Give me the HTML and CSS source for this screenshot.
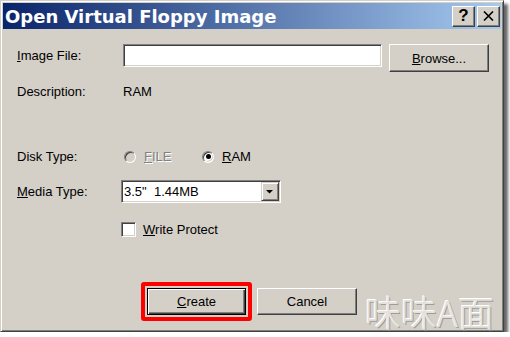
FILE: index.html
```html
<!DOCTYPE html>
<html>
<head>
<meta charset="utf-8">
<link rel="stylesheet" href="styles.css">
</head>
<body>
<div class="window">
  <div class="titlebar">
    <span class="title">Open Virtual Floppy Image</span>
    <div class="tbtns">
      <span class="tbtn help">?</span>
      <span class="tbtn close"><svg width="11" height="10" viewBox="0 0 11 10"><path d="M1 0.5 L10 9.5 M10 0.5 L1 9.5" stroke="#000" stroke-width="1.6" fill="none"/></svg></span>
    </div>
  </div>
  <div class="content">
    <div class="row r-file">
      <span class="label"><u>I</u>mage File:</span>
      <span class="input"></span>
      <span class="btn browse"><span><u>B</u>rowse...</span></span>
    </div>
    <div class="row r-desc">
      <span class="label">Description:</span>
      <span class="value">RAM</span>
    </div>
    <div class="row r-disk">
      <span class="label lbl-disk">Disk Type:</span>
      <span class="radio disabled"></span>
      <span class="rlabel rl-file disabled-text"><u>F</u>ILE</span>
      <span class="radio checked"></span>
      <span class="rlabel"><u>R</u>AM</span>
    </div>
    <div class="row r-media">
      <span class="label lbl-media"><u>M</u>edia Type:</span>
      <div class="select">
        <span class="seltext">3.5"&nbsp; 1.44MB</span>
        <span class="selbtn"><svg width="8" height="4" viewBox="0 0 8 4"><path d="M0 0 H7 L3.5 3.5 Z" fill="#000"/></svg></span>
      </div>
    </div>
    <div class="row r-check">
      <span class="check"></span>
      <span class="clabel"><u>W</u>rite Protect</span>
    </div>
    <div class="row r-btns">
      <span class="highlight"><span class="btn default"><span><u>C</u>reate</span></span></span>
      <span class="btn cancel"><span>Cancel</span></span>
    </div>
  </div>
  <div class="watermark">味味A面</div>
</div>
</body>
</html>
```
FILE: styles.css
```css
html, body {
  margin: 0;
  padding: 0;
  background: #ffffff;
}
body {
  font-family: "Liberation Sans", Arial, sans-serif;
  font-size: 13px;
  color: #000;
}
.window {
  position: relative;
  width: 504px;
  height: 332px;
  box-sizing: border-box;
  background: #d4d0c8;
  border: 1px solid;
  border-color: #d4d0c8 #404040 #404040 #d4d0c8;
  padding: 2px;
  box-shadow: inset 1px 1px #ffffff, inset -1px -1px #808080, 4px 4px 3px rgba(0,0,0,0.6);
}
.titlebar {
  height: 26px;
  display: flex;
  align-items: center;
  justify-content: space-between;
  background: linear-gradient(to right, #0a246a, #a6caf0);
}
.title {
  font-family: "DejaVu Sans", Verdana, sans-serif;
  font-weight: bold;
  font-size: 18px;
  color: #fff;
  padding-left: 2px;
  white-space: nowrap;
}
.tbtns {
  display: flex;
  gap: 2px;
  margin-right: 1px;
}
.tbtn {
  width: 23px;
  height: 21px;
  box-sizing: border-box;
  background: #d4d0c8;
  border: 1px solid;
  border-color: #ffffff #404040 #404040 #ffffff;
  box-shadow: inset -1px -1px #808080;
  display: flex;
  align-items: center;
  justify-content: center;
}
.help {
  font-family: "Liberation Sans", Arial, sans-serif;
  font-weight: bold;
  font-size: 17px;
  line-height: 1;
  padding-bottom: 1px;
}
.content {
  padding-left: 14px;
}
.row {
  display: flex;
}
.label {
  width: 106px;
  flex: none;
}
.r-file {
  margin-top: 15px;
  align-items: flex-start;
}
.r-file .label {
  line-height: 23px;
}
.input {
  width: 259px;
  height: 23px;
  box-sizing: border-box;
  background: #fff;
  border: 1px solid;
  border-color: #808080 #ffffff #ffffff #808080;
  box-shadow: inset 1px 1px #404040, inset -1px -1px #d4d0c8;
}
.btn {
  box-sizing: border-box;
  background: #d4d0c8;
  border: 1px solid;
  border-color: #ffffff #404040 #404040 #ffffff;
  box-shadow: inset -1px -1px #808080;
  display: flex;
  align-items: center;
  justify-content: center;
  flex: none;
}
.browse {
  margin-left: 7px;
  width: 100px;
  height: 28px;
}
.r-desc {
  margin-top: 12px;
  line-height: 15px;
}
.r-disk {
  margin-top: 50px;
  line-height: 15px;
  align-items: center;
}
.lbl-disk {
  width: 107px;
}
.radio {
  position: relative;
  width: 12px;
  height: 12px;
  box-sizing: border-box;
  border-radius: 50%;
  border: 1px solid;
  border-color: #808080 #ffffff #ffffff #808080;
  box-shadow: inset 1px 1px #404040, inset -1px -1px #d4d0c8;
  background: #fff;
  flex: none;
}
.radio.disabled {
  background: #d4d0c8;
}
.radio.checked::after {
  content: "";
  position: absolute;
  left: 2.5px;
  top: 2.5px;
  width: 5px;
  height: 5px;
  border-radius: 50%;
  background: #000;
}
.rlabel {
  margin-left: 8px;
}
.rl-file {
  width: 58px;
}
.disabled-text {
  color: #808080;
  text-shadow: 1px 1px #ffffff;
}
.r-media {
  margin-top: 16px;
  align-items: center;
}
.lbl-media {
  width: 104px;
}
.select {
  width: 160px;
  height: 23px;
  box-sizing: border-box;
  background: #fff;
  border: 1px solid;
  border-color: #808080 #ffffff #ffffff #808080;
  box-shadow: inset 1px 1px #404040, inset -1px -1px #d4d0c8;
  display: flex;
  align-items: center;
  justify-content: space-between;
  padding: 1px;
}
.seltext {
  padding-left: 1px;
  line-height: 15px;
  white-space: nowrap;
}
.selbtn {
  width: 18px;
  height: 19px;
  box-sizing: border-box;
  background: #d4d0c8;
  border: 1px solid;
  border-color: #d4d0c8 #404040 #404040 #d4d0c8;
  box-shadow: inset 1px 1px #ffffff, inset -1px -1px #808080;
  display: flex;
  align-items: center;
  justify-content: center;
}
.r-check {
  margin-top: 19px;
  padding-left: 104px;
  align-items: center;
  line-height: 15px;
}
.check {
  width: 15px;
  height: 15px;
  box-sizing: border-box;
  background: #fff;
  border: 1px solid;
  border-color: #808080 #ffffff #ffffff #808080;
  box-shadow: inset 1px 1px #404040, inset -1px -1px #d4d0c8;
  flex: none;
}
.clabel {
  margin-left: 7px;
}
.r-btns {
  margin-top: 45px;
  padding-left: 124px;
  align-items: flex-start;
}
.highlight {
  display: inline-flex;
  border: 4px solid #ff0000;
  border-radius: 3px;
  padding: 2px;
}
.default {
  width: 99px;
  height: 27px;
  border: 1px solid #000;
  box-shadow: inset 1px 1px #ffffff, inset -1px -1px #404040, inset -2px -2px #808080;
}
.cancel {
  margin-left: 5px;
  margin-top: 6px;
  width: 100px;
  height: 27px;
}
.watermark {
  position: absolute;
  left: 364px;
  top: 289px;
  font-family: "Noto Sans CJK SC", sans-serif;
  font-weight: 300;
  font-size: 36px;
  line-height: 42px;
  color: #e4e1dc;
  text-shadow: -1px -1px 0 #ffffff, 1px 1px 0 #a09c98;
  white-space: nowrap;
}
```
